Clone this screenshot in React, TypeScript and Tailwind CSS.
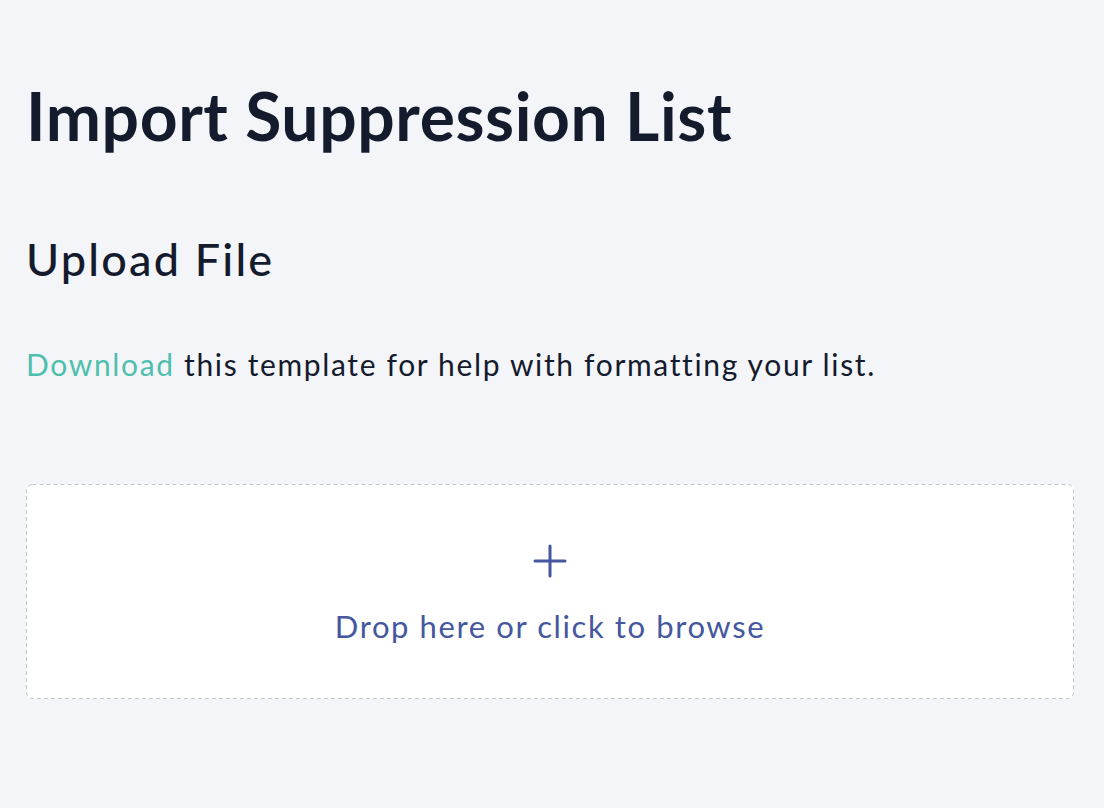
import React from 'react';

const App = () => {
  return (
    <div className="min-h-[808px] w-full bg-[#f4f5f9] px-[26px] pt-[76px] font-['Lato',sans-serif] text-[#141b2d]">
      <h1 className="text-[66px] font-bold leading-[80px] tracking-[0.6px]">Import Suppression List</h1>
      <h2 className="mt-[75px] text-[45px] font-medium leading-[56px] tracking-[2.2px]">Upload File</h2>
      <p className="mt-[57px] text-[30px] leading-[40px] tracking-[1.65px]">
        <a href="#" className="text-[#4fbfad]">Download</a> this template for help with formatting your list.
      </p>
      <div className="relative mt-[100px] flex h-[215px] w-[1048px] cursor-pointer flex-col items-center rounded-[6px] bg-white pt-[60px] text-[#45579e]">
        <svg className="pointer-events-none absolute inset-0 h-full w-full" width="1048" height="215">
          <rect x="0.5" y="0.5" width="1047" height="214" rx="6" fill="none" stroke="#c4c4c4" strokeDasharray="4 3" />
        </svg>
        <svg width="34" height="34" viewBox="0 0 34 34">
          <path d="M17 2v30M2 17h30" stroke="currentColor" strokeWidth="3" strokeLinecap="round" />
        </svg>
        <span className="mt-[30px] text-[31px] leading-[36px] tracking-[1.6px]">Drop here or click to browse</span>
      </div>
    </div>
  );
};

export default App;
